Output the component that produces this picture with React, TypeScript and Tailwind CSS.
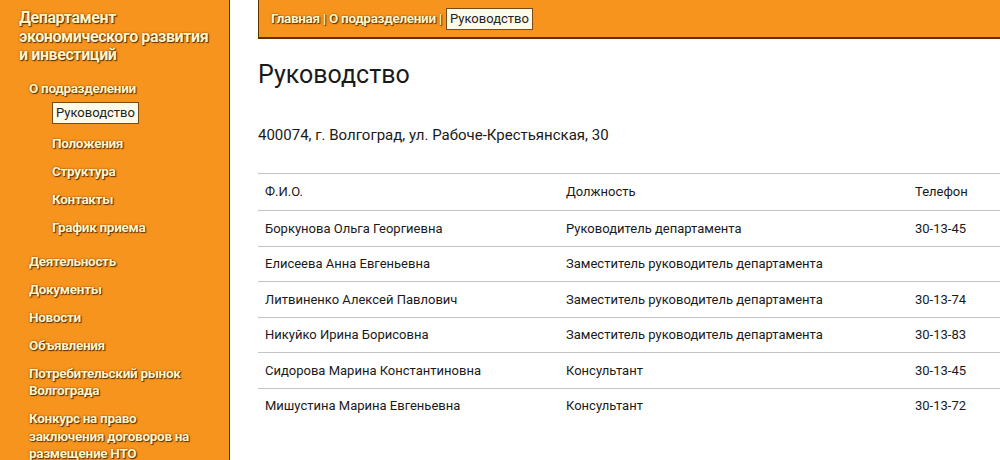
import React from "react";

const subItems = ["Положения", "Структура", "Контакты", "График приема"];

const topItems = [
  ["Деятельность"],
  ["Документы"],
  ["Новости"],
  ["Объявления"],
  ["Потребительский рынок", "Волгограда"],
  ["Конкурс на право", "заключения договоров на", "размещение НТО"],
];

const rows = [
  ["Боркунова Ольга Георгиевна", "Руководитель департамента", "30-13-45"],
  ["Елисеева Анна Евгеньевна", "Заместитель руководитель департамента", ""],
  ["Литвиненко Алексей Павлович", "Заместитель руководитель департамента", "30-13-74"],
  ["Никуйко Ирина Борисовна", "Заместитель руководитель департамента", "30-13-83"],
  ["Сидорова Марина Константиновна", "Консультант", "30-13-45"],
  ["Мишустина Марина Евгеньевна", "Консультант", "30-13-72"],
];

const shadow = "[text-shadow:1px_1px_1px_#5a2e00,0_0_2px_#7a3e00]";

export default function App() {
  return (
    <div className="flex h-[460px] w-[1000px] overflow-hidden bg-white font-['Roboto',sans-serif]">
      {/* Sidebar */}
      <aside className="w-[230px] shrink-0 border-r border-[#5a3000] bg-[#f7941e] pl-[19px] pt-[9px]">
        <div className={`text-[16px] font-bold leading-[18.5px] tracking-[-0.4px] text-[#fff4c8] ${shadow}`}>
          Департамент
          <br />
          экономического развития
          <br />
          и инвестиций
        </div>
        <nav className="mt-[13px] pl-[10px]">
          <div className={`text-[13.5px] font-bold tracking-[-0.3px] text-[#fff4c8] ${shadow}`}>
            О подразделении
          </div>
          <div className="mt-[2px] pl-[23px]">
            <span className="inline-block border border-[#7a4a10] bg-[#fffbea] px-[3px] py-[1px] text-[13px] leading-[18px] text-[#222]">
              Руководство
            </span>
          </div>
          <ul className="mt-[10px] flex flex-col gap-[9px] pl-[23px]">
            {subItems.map((s) => (
              <li
                key={s}
                className={`text-[13.5px] font-bold leading-[19px] tracking-[-0.3px] text-[#fff4c8] ${shadow}`}
              >
                {s}
              </li>
            ))}
          </ul>
          <ul className="mt-[16px] flex flex-col gap-[10.5px]">
            {topItems.map((lines) => (
              <li
                key={lines[0]}
                className={`text-[13.5px] font-bold leading-[17.5px] tracking-[-0.3px] text-[#fff4c8] ${shadow}`}
              >
                {lines.map((l, i) => (
                  <div key={i}>{l}</div>
                ))}
              </li>
            ))}
          </ul>
        </nav>
      </aside>

      {/* Main */}
      <main className="ml-[28px] flex-1">
        <div className="flex h-[39px] items-center border-b-2 border-l border-[#5a3000] bg-[#f7941e] pl-[12px]">
          <span className={`text-[13.5px] font-bold tracking-[-0.3px] text-[#fff4c8] ${shadow}`}>
            Главная | О подразделении |
          </span>
          <span className="ml-[4px] inline-block border border-[#7a4a10] bg-[#fffbea] px-[3px] py-[1px] text-[13px] leading-[18px] text-[#222]">
            Руководство
          </span>
        </div>

        <h1 className="mt-[20px] text-[25px] font-normal leading-[32px] text-[#1a1a1a]">Руководство</h1>

        <p className="mt-[34px] text-[15px] leading-[20px] text-[#1a1a1a]">
          400074, г. Волгоград, ул. Рабоче-Крестьянская, 30
        </p>

        <table className="mt-[28px] w-full border-collapse text-[13px] text-[#1a1a1a]">
          <thead>
            <tr className="h-[37px] border-y border-[#c4c4c4]">
              <th className="w-[301px] pl-[7px] text-left font-normal">Ф.И.О.</th>
              <th className="w-[349px] pl-[7px] text-left font-normal">Должность</th>
              <th className="pl-[7px] text-left font-normal">Телефон</th>
            </tr>
          </thead>
          <tbody>
            {rows.map((r) => (
              <tr key={r[0]} className="h-[35.5px] border-b border-[#c4c4c4] last:border-b-0">
                <td className="pl-[7px]">{r[0]}</td>
                <td className="pl-[7px]">{r[1]}</td>
                <td className="pl-[7px]">{r[2]}</td>
              </tr>
            ))}
          </tbody>
        </table>
      </main>
    </div>
  );
}
